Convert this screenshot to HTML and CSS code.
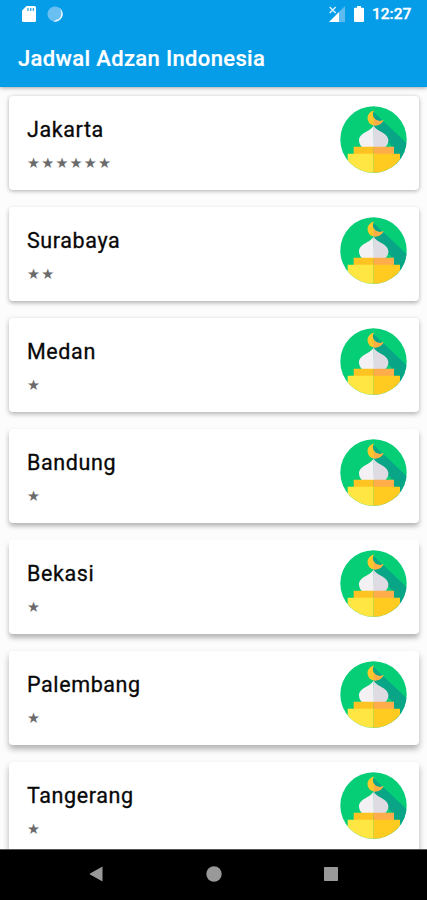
FILE: index.html
```
<!DOCTYPE html>
<html lang="id">
<head>
<meta charset="utf-8">
<title>Jadwal Adzan Indonesia</title>
<link rel="stylesheet" href="styles.css">
</head>
<body>
<svg class="defs" aria-hidden="true">
  <defs>
    <clipPath id="disc"><circle cx="33.5" cy="33.5" r="33.2"/></clipPath>
    <symbol id="mosque" viewBox="0 0 67 67">
      <g clip-path="url(#disc)">
        <path fill="#06ce77" d="M0 0h67v67H0z"/>
        <path fill="#08a587" d="M33 5.500L67 37.500V60H54V42L33.500 22z"/>
        <path fill="#fec72c" d="M34 4.600C29.500 5.800 27.300 9.400 27.600 12.700C28 16.800 31.200 19.400 35.200 19.400C39.500 19.200 42.400 17 43.500 14C40.600 15.600 37 15.200 34.600 12.700C32.500 10.400 32.400 7.300 34 4.600z"/>
        <path fill="#ffad45" d="M34.600 12.700C37 15.200 40.600 15.600 43.500 14C42.400 17 39.500 19.200 35.200 19.400L33.700 19.300V11.500z"/>
        <path fill="#f3f1f4" d="M33.600 19C32.300 25 19 26.500 19 34.300C19 37 20.200 39.200 21.800 41H34z"/>
        <path fill="#dedce2" d="M33.600 19C34.900 25 48.400 26.500 48.400 34.300C48.400 37 47.200 39.200 45.600 41h-12z"/>
        <path fill="#ffc422" d="M13.700 40.700h20v8h-20z"/>
        <path fill="#ffac4b" d="M33.600 40.700H54v8H33.600z"/>
        <path fill="#ffe642" d="M7.700 47.700h26V67h-26z"/>
        <path fill="#ffcb20" d="M33.600 47.700H60V67H33.600z"/>
      </g>
    </symbol>
  </defs>
</svg>
<div class="screen">
  <header class="appbar">
    <div class="status">
      <svg class="sd" viewBox="0 0 14 16"><path fill="#fff" d="M4.500 0H12.500Q14 0 14 1.500V14.500Q14 16 12.500 16H1.500Q0 16 0 14.500V4.500z"/><path stroke="#39adec" stroke-width="1.400" d="M6 2v3M8.700 2v3M11.400 2v3"/></svg>
      <svg class="sync" viewBox="0 0 16 16"><circle cx="8" cy="8" r="7.600" fill="#69bff1"/><path fill="#e8f6fe" d="M12.500 1.800A7.700 7.700 0 0 1 6 15.500Q8 15.300 9 13.800Q12.500 13.800 13.800 10Q15 5 12.500 1.800z"/></svg>
      <span class="spacer"></span>
      <svg class="signal" viewBox="0 0 16 16"><path fill="#5dbbf0" d="M16 0V16H10V6z"/><path fill="#fff" d="M10 6V16H0z"/><path stroke="#d5eefb" stroke-width="1.500" d="M.7 1l6 6M6.700 1l-6 6"/></svg>
      <svg class="battery" viewBox="0 0 10 16"><path fill="#fff" d="M3 0h4v1.800h2q1 0 1 1V15q0 1-1 1H1q-1 0-1-1V2.800q0-1 1-1h2z"/></svg>
      <span class="clock">12:27</span>
    </div>
    <h1 class="title">Jadwal Adzan Indonesia</h1>
  </header>
  <main class="list">
    <article class="card lift-1"><div><h2 class="city">Jakarta</h2><p class="stars">★★★★★★</p></div><svg class="icon"><use href="#mosque"/></svg></article>
    <article class="card lift-2"><div><h2 class="city">Surabaya</h2><p class="stars">★★</p></div><svg class="icon"><use href="#mosque"/></svg></article>
    <article class="card lift-3"><div><h2 class="city">Medan</h2><p class="stars">★</p></div><svg class="icon"><use href="#mosque"/></svg></article>
    <article class="card lift-4"><div><h2 class="city">Bandung</h2><p class="stars">★</p></div><svg class="icon"><use href="#mosque"/></svg></article>
    <article class="card lift-5"><div><h2 class="city">Bekasi</h2><p class="stars">★</p></div><svg class="icon"><use href="#mosque"/></svg></article>
    <article class="card lift-6"><div><h2 class="city">Palembang</h2><p class="stars">★</p></div><svg class="icon"><use href="#mosque"/></svg></article>
    <article class="card lift-6"><div><h2 class="city">Tangerang</h2><p class="stars">★</p></div><svg class="icon"><use href="#mosque"/></svg></article>
  </main>
  <nav class="navbar">
    <svg viewBox="0 0 16 16"><path fill="#999" d="M13.500 .5v15L1 8.500Q.3 8 1 7.500z"/></svg>
    <svg viewBox="0 0 16 16"><circle cx="8" cy="8" r="7.700" fill="#999"/></svg>
    <svg viewBox="0 0 16 16"><rect x="1" y="1" width="14" height="14" rx=".8" fill="#999"/></svg>
  </nav>
</div>
</body>
</html>
```
FILE: styles.css
```
* { box-sizing: border-box; }
body { margin: 0; font-family: Roboto, sans-serif; background: #fcfcfc; }
h1, h2, p { margin: 0; }
svg { display: block; flex: none; }
.defs { position: absolute; width: 0; height: 0; }
.screen { display: flex; flex-direction: column; width: 427px; height: 900px; overflow: hidden; }
.appbar { flex: none; height: 87px; background: #059ce8; color: #fff; box-shadow: 0 1px 4px rgba(0, 0, 0, .35); z-index: 1; }
.status { display: flex; align-items: center; height: 28px; padding: 0 16px 0 22px; }
.sd { width: 14px; height: 16px; }
.sync { width: 16px; height: 16px; margin-left: 11px; }
.spacer { flex: 1; }
.signal { width: 16px; height: 16px; }
.battery { width: 10px; height: 16px; margin: 0 8px 0 9px; }
.clock { width: 39px; font-size: 15.500px; font-weight: 500; line-height: 28px; white-space: nowrap; -webkit-text-stroke: .3px #fff; }
.title { padding-left: 18px; font-size: 22px; font-weight: 500; line-height: 62px; letter-spacing: .35px; -webkit-text-stroke: .2px #fff; }
.list { flex: 1; min-height: 0; overflow: hidden; padding: 9px 8px 0 9px; }
.card { display: flex; justify-content: space-between; height: 93.500px; margin-bottom: 17.500px; padding: 10px 12px 0 18px; background: #fff; border-radius: 4px; }
.lift-1 { box-shadow: 0 1px 4px rgba(0, 0, 0, .32); }
.lift-2 { box-shadow: 0 2px 4px rgba(0, 0, 0, .3); }
.lift-3 { box-shadow: 0 2px 5px rgba(0, 0, 0, .3); }
.lift-4 { box-shadow: 0 3px 5px rgba(0, 0, 0, .3); }
.lift-5 { box-shadow: 0 4px 5px rgba(0, 0, 0, .28); }
.lift-6 { box-shadow: 0 4px 6px rgba(0, 0, 0, .3); }
.city { padding-top: 9px; font-size: 21.500px; font-weight: 400; line-height: 30px; letter-spacing: .6px; color: #080808; -webkit-text-stroke: .3px #080808; }
.stars { margin-top: 8px; font-family: "DejaVu Sans", sans-serif; font-size: 14.500px; line-height: 20px; letter-spacing: 1.200px; color: #6b6b6b; }
.icon { width: 67px; height: 67px; margin-top: .4px; }
.navbar { flex: none; display: flex; gap: 101px; height: 51px; padding: 16px 0 0 89px; background: #000; border-top: 1px solid #555; }
.navbar svg { width: 16px; height: 16px; }
```
